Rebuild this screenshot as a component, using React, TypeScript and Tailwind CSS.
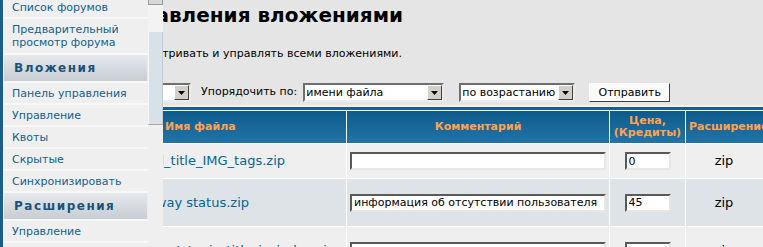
import React from "react";

const font = "font-['DejaVu_Sans',Verdana,sans-serif]";

function SideItem({ children, tall }: { children: React.ReactNode; tall?: boolean }) {
  return (
    <div
      className={`flex shrink-0 items-center bg-[#efefef] pl-[8px] text-[11px] leading-[13px] text-[#115f92] ${
        tall ? "h-[34px]" : "h-[20px]"
      }`}
    >
      {children}
    </div>
  );
}

function SideHead({ children }: { children: React.ReactNode }) {
  return (
    <div className="flex h-[26px] shrink-0 items-center border-r border-r-[#e9ecef] bg-gradient-to-b from-[#e6e9ec] to-[#c7cdd3] pl-[10px] text-[12px] font-bold tracking-[1.5px] text-[#1b527c]">
      {children}
    </div>
  );
}

function Arrow() {
  return (
    <div className="flex h-full w-[15px] shrink-0 items-center justify-center border border-t-white border-l-white border-b-[#404040] border-r-[#404040] bg-[#d4d0c8]">
      <svg width="7" height="4" viewBox="0 0 7 4">
        <path d="M0 0h7L3.5 4z" fill="#000" />
      </svg>
    </div>
  );
}

function Select({ text, className }: { text: string; className: string }) {
  return (
    <div
      className={`flex h-[19px] shrink-0 border-2 border-t-[#6f6f6f] border-l-[#6f6f6f] border-b-[#ececec] border-r-[#ececec] bg-white ${className}`}
    >
      <div className="flex-1 overflow-hidden whitespace-nowrap pl-[1px] text-[11px] leading-[15px] text-black">
        {text}
      </div>
      <Arrow />
    </div>
  );
}

function Field({ value, className }: { value: string; className: string }) {
  return (
    <input
      readOnly
      value={value}
      className={`h-[18px] border-2 border-t-[#5a5a5a] border-l-[#5a5a5a] border-b-[#e6e6e6] border-r-[#e6e6e6] bg-white px-[2px] text-[11px] leading-[14px] text-black outline-none ${className}`}
    />
  );
}

const rows = [
  { name: "Alt_and_title_IMG_tags.zip", nameBox: "w-[122px]", comment: "", price: "0", bg: "bg-[#efefef]", h: "h-[34px]" },
  { name: "Away status.zip", nameBox: "w-[86px]", comment: "информация об отсутствии пользователя", price: "45", bg: "bg-[#dee3e7]", h: "h-[47px]" },
  { name: "Last_topic_title_in_index.zip", nameBox: "w-[172px]", comment: "отображение последней темы на главной", price: "0", bg: "bg-[#efefef]", h: "h-[48px]" },
];

export default function App() {
  return (
    <div className={`flex h-[247px] w-[763px] overflow-hidden bg-[#e5e5e5] ${font}`}>
      {/* left frame */}
      <div className="flex h-full w-[148px] shrink-0">
        <div className="w-[3px] bg-[#1d5d8a]" />
        <div className="w-[1px] bg-[#f4f4f4]" />
        <div className="-mt-[3px] flex flex-1 flex-col gap-[2px] bg-[#f8f8f8]">
          <SideItem>Список форумов</SideItem>
          <SideItem tall>
            Предварительный
            <br />
            просмотр форума
          </SideItem>
          <SideHead>Вложения</SideHead>
          <SideItem>Панель управления</SideItem>
          <SideItem>Управление</SideItem>
          <SideItem>Квоты</SideItem>
          <SideItem>Скрытые</SideItem>
          <SideItem>Синхронизировать</SideItem>
          <SideHead>Расширения</SideHead>
          <SideItem>Управление</SideItem>
          <SideItem>Группы</SideItem>
        </div>
      </div>

      {/* frame scrollbar */}
      <div className="flex h-full w-[15px] shrink-0 flex-col bg-[#efefef]">
        <div className="h-[5px] shrink-0 border border-t-0 border-[#9a9a9a] bg-[#d8d8d8]" />
        <div className="h-[27px] shrink-0 bg-[#f3f3f3]" />
        <div className="h-[93px] shrink-0 border-b border-l border-r border-b-[#a8a8a8] border-l-[#f4f6f8] border-r-[#c2cad2] bg-[#d9e0e7]" />
        <div className="flex-1 bg-[#efefef]" />
      </div>

      {/* main */}
      <div className="min-w-0 flex-1 overflow-hidden">
        <div className="flex h-[30px] w-[240px] justify-end overflow-hidden whitespace-nowrap text-[20px] font-bold leading-[30px] text-black">
          <span className="shrink-0">Панель управления вложениями</span>
        </div>
        <div className="mt-[17px] flex w-[239px] justify-end overflow-hidden whitespace-nowrap text-[11px] leading-[13px] text-black">
          <span className="shrink-0">Здесь вы можете просматривать и управлять всеми вложениями.</span>
        </div>

        <div className="mt-[23px] flex h-[19px] items-center">
          <div className="flex w-[28px] shrink-0 justify-end overflow-hidden">
            <Select text="Все" className="w-[80px]" />
          </div>
          <span className="ml-[10px] shrink-0 whitespace-nowrap text-[11px] text-black">Упорядочить по:</span>
          <Select text="имени файла" className="ml-[6px] w-[141px]" />
          <Select text="по возрастанию" className="ml-[15px] w-[116px]" />
          <button className="ml-[14px] h-[19px] w-[81px] shrink-0 border border-t-white border-l-white border-b-[#404040] border-r-[#404040] bg-[#fafafa] text-[11px] leading-[15px] text-black">
            Отправить
          </button>
        </div>

        <div className="mt-[3px] h-[2px] bg-[#f1f0ea]" />
        <div className="h-[3px] bg-[#1b5e8c]" />
        <div className="grid w-[650px] grid-cols-[183px_262px_75px_126px] gap-px bg-white pt-px">
          <div className="flex h-[32px] items-center bg-gradient-to-b from-[#0d5b8c] to-[#2274a7] pl-[2px] text-[11px] font-bold text-[#ffa34f]">
            Имя файла
          </div>
          <div className="flex h-[32px] items-center justify-center bg-gradient-to-b from-[#0d5b8c] to-[#2274a7] text-[11px] font-bold text-[#ffa34f]">
            Комментарий
          </div>
          <div className="flex h-[32px] flex-col items-center justify-center bg-gradient-to-b from-[#0d5b8c] to-[#2274a7] text-center text-[11px] font-bold leading-[12px] text-[#ffa34f]">
            <span>Цена,</span>
            <span className="whitespace-nowrap">(Кредиты)</span>
          </div>
          <div className="flex h-[32px] items-center whitespace-nowrap bg-gradient-to-b from-[#0d5b8c] to-[#2274a7] pl-[3px] text-[11px] font-bold text-[#ffa34f]">
            Расширение
          </div>

          {rows.map((r) => (
            <React.Fragment key={r.name}>
              <div className={`flex items-center ${r.h} ${r.bg}`}>
                <div className={`flex justify-end overflow-hidden whitespace-nowrap text-[13px] text-[#006699] ${r.nameBox}`}>
                  <span className="shrink-0">{r.name}</span>
                </div>
              </div>
              <div className={`flex items-center ${r.h} ${r.bg}`}>
                <Field value={r.comment} className="ml-[3px] w-[256px]" />
              </div>
              <div className={`flex items-center justify-center ${r.h} ${r.bg}`}>
                <Field value={r.price} className="w-[46px]" />
              </div>
              <div className={`flex items-center ${r.h} ${r.bg}`}>
                <span className="w-[76px] text-center text-[13px] text-black">zip</span>
              </div>
            </React.Fragment>
          ))}
        </div>
      </div>
    </div>
  );
}
